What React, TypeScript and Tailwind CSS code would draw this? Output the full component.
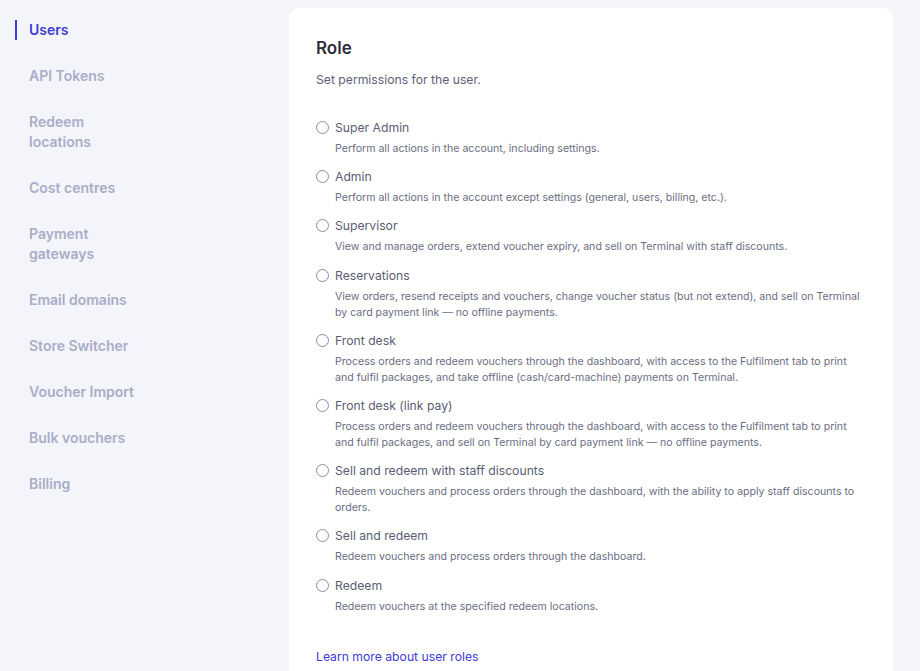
import React, { useState } from 'react';

const navItems = [
  'Users',
  'API Tokens',
  'Redeem locations',
  'Cost centres',
  'Payment gateways',
  'Email domains',
  'Store Switcher',
  'Voucher Import',
  'Bulk vouchers',
  'Billing',
];

const roles = [
  { name: 'Super Admin', description: 'Perform all actions in the account, including settings.' },
  { name: 'Admin', description: 'Perform all actions in the account except settings (general, users, billing, etc.).' },
  { name: 'Supervisor', description: 'View and manage orders, extend voucher expiry, and sell on Terminal with staff discounts.' },
  {
    name: 'Reservations',
    description:
      'View orders, resend receipts and vouchers, change voucher status (but not extend), and sell on Terminal by card payment link — no offline payments.',
  },
  {
    name: 'Front desk',
    description:
      'Process orders and redeem vouchers through the dashboard, with access to the Fulfilment tab to print and fulfil packages, and take offline (cash/card-machine) payments on Terminal.',
  },
  {
    name: 'Front desk (link pay)',
    description:
      'Process orders and redeem vouchers through the dashboard, with access to the Fulfilment tab to print and fulfil packages, and sell on Terminal by card payment link — no offline payments.',
  },
  {
    name: 'Sell and redeem with staff discounts',
    description: 'Redeem vouchers and process orders through the dashboard, with the ability to apply staff discounts to orders.',
  },
  { name: 'Sell and redeem', description: 'Redeem vouchers and process orders through the dashboard.' },
  { name: 'Redeem', description: 'Redeem vouchers at the specified redeem locations.' },
];

const App: React.FC = () => {
  const [selected, setSelected] = useState<string | null>(null);

  return (
    <div className="min-h-screen flex bg-[#f4f5fa] font-['Inter',sans-serif]">
      {/* Settings navigation */}
      <nav className="w-[289px] shrink-0 pt-[20px] pl-[15px]">
        <ul className="flex flex-col gap-[26px]">
          {navItems.map((item, index) => (
            <li key={item} className="flex">
              <span className={`w-[2px] h-5 mr-3 ${index === 0 ? 'bg-[#3d3bd4]' : 'bg-transparent'}`} />
              <a
                href="#"
                className={`w-[112px] text-[14px] leading-5 font-semibold ${
                  index === 0 ? 'text-[#3d3bd4]' : 'text-[#a9adc7]'
                }`}
              >
                {item}
              </a>
            </li>
          ))}
        </ul>
      </nav>

      {/* Role card */}
      <main className="flex-1 pt-2 pr-[27px]">
        <div className="bg-white rounded-[10px] px-[27px] pt-[26px] pb-10">
          <h2 className="text-[17px] leading-7 font-semibold text-[#2e2e3c]">Role</h2>
          <p className="mt-2 text-[12.2px] leading-5 text-[#5e6175]">Set permissions for the user.</p>

          <div className="mt-7 flex flex-col gap-[10.2px]">
            {roles.map(role => (
              <label key={role.name} className="flex cursor-pointer">
                <input
                  type="radio"
                  name="role"
                  className="sr-only"
                  checked={selected === role.name}
                  onChange={() => setSelected(role.name)}
                />
                <span className="mt-[3px] w-[13px] h-[13px] shrink-0 rounded-full border border-[#8b8d9e] bg-white" />
                <span className="ml-[6px] flex-1">
                  <span className="block text-[12.2px] leading-5 text-[#5a5d72]">{role.name}</span>
                  <span className="block mt-[3px] text-[10.6px] leading-4 text-[#6b6e82] pr-1">{role.description}</span>
                </span>
              </label>
            ))}
          </div>

          <a href="#" className="mt-8 inline-block text-[12.2px] leading-5 text-[#3d3bd4]">
            Learn more about user roles
          </a>
        </div>
      </main>
    </div>
  );
};

export default App;
